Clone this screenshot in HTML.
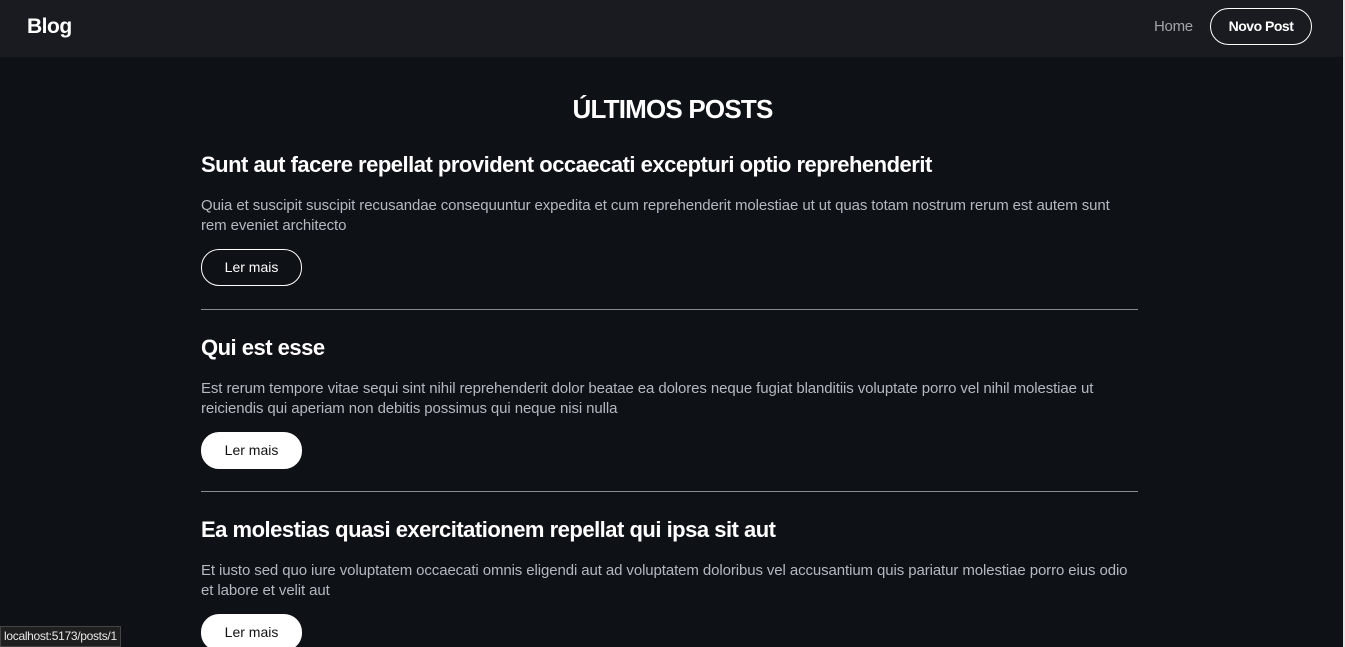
<!DOCTYPE html>
<html><head><meta charset="utf-8"><style>
*{box-sizing:border-box;margin:0;padding:0}
html,body{width:1345px;height:647px;overflow:hidden}
body{background:#0e1116;font-family:"Liberation Sans",sans-serif;color:#fff;position:relative}
.nav{height:57px;background:#1a1b20;position:relative}
.logo{position:absolute;left:27px;top:15px;font-size:21px;font-weight:bold;letter-spacing:-0.5px}
.home{position:absolute;left:1154px;top:18px;font-size:15px;color:#a0a3a8;letter-spacing:-0.3px}
.np{position:absolute;left:1210px;top:8px;width:102px;height:37px;border:1px solid #fff;border-radius:19px;font-size:14px;font-weight:bold;text-align:center;line-height:35px;letter-spacing:-0.5px}
h1{position:absolute;top:94px;left:0;width:1345px;text-align:center;font-size:26px;font-weight:bold;letter-spacing:-0.8px}
.post{position:absolute;left:201px;width:937px}
.post h2{font-size:22px;font-weight:bold;letter-spacing:-0.5px;line-height:26px}
.post p{margin-top:18px;font-size:15px;line-height:19.5px;color:#b4b8c0;letter-spacing:-0.1px;width:940px}
.btn{display:block;margin-top:14px;width:101px;height:37px;border-radius:18px;border:1px solid #fff;font-size:14px;text-align:center;line-height:35px}
.w{background:#fff;color:#111}
.hr{position:absolute;left:201px;width:937px;height:1px;background:#8a8c90}
.sb{position:absolute;right:0;top:0;width:2px;height:647px;background:#e6e6e6}
.status{position:absolute;left:0;bottom:0;height:21px;background:#1f1f1f;border:1px solid #444;color:#e8e8e8;font-size:12px;line-height:19px;padding:0 3px;letter-spacing:-0.3px}
</style></head><body>
<div class="nav"><div class="logo">Blog</div><div class="home">Home</div><div class="np">Novo Post</div></div>
<h1>ÚLTIMOS POSTS</h1>
<div class="post" style="top:152px"><h2>Sunt aut facere repellat provident occaecati excepturi optio reprehenderit</h2><p>Quia et suscipit suscipit recusandae consequuntur expedita et cum reprehenderit molestiae ut ut quas totam nostrum rerum est autem sunt<br>rem eveniet architecto</p><div class="btn">Ler mais</div></div>
<div class="hr" style="top:309px"></div>
<div class="post" style="top:335px"><h2>Qui est esse</h2><p>Est rerum tempore vitae sequi sint nihil reprehenderit dolor beatae ea dolores neque fugiat blanditiis voluptate porro vel nihil molestiae ut<br>reiciendis qui aperiam non debitis possimus qui neque nisi nulla</p><div class="btn w">Ler mais</div></div>
<div class="hr" style="top:491px"></div>
<div class="post" style="top:517px"><h2>Ea molestias quasi exercitationem repellat qui ipsa sit aut</h2><p>Et iusto sed quo iure voluptatem occaecati omnis eligendi aut ad voluptatem doloribus vel accusantium quis pariatur molestiae porro eius odio<br>et labore et velit aut</p><div class="btn w">Ler mais</div></div>
<div class="sb"></div>
<div class="status">localhost:5173/posts/1</div>
</body></html>
